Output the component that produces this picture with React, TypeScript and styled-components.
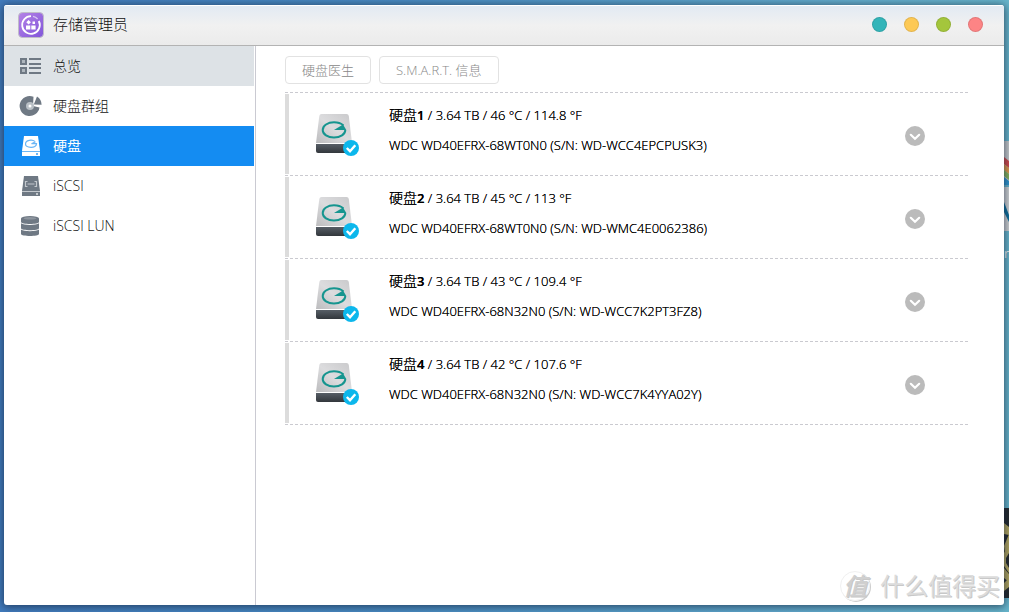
import React, { useState } from 'react';
import styled, { createGlobalStyle } from 'styled-components';

const GlobalStyle = createGlobalStyle`
  *, *::before, *::after { box-sizing: border-box; }
  body {
    margin: 0;
    font-family: "Open Sans", "Noto Sans CJK SC", sans-serif;
    font-size: 13px;
    line-height: 20px;
    color: #000;
  }
  button { font: inherit; cursor: pointer; }
  ul { list-style: none; margin: 0; padding: 0; }
`;

const Desktop = styled.div`
  position: relative;
  display: flex;
  min-height: 100vh;
  padding: 5px 5px 7px 4px;
  overflow: hidden;
  background: linear-gradient(90deg, #427cbe 0%, #4a8dc4 40%, #66b0cf 85%, #68b6cc 100%);
`;

const DesktopIcon = styled.div<{ $top: number; $height: number; $color: string }>`
  position: absolute;
  right: 0;
  top: ${(p) => p.$top}px;
  width: 10px;
  height: ${(p) => p.$height}px;
  background: ${(p) => p.$color};
  svg { display: block; position: absolute; right: 0; top: 0; }
`;

const DesktopLabel = styled.span`
  position: absolute;
  right: 0;
  top: 244px;
  color: #fff;
  font-size: 12px;
`;

const Window = styled.main`
  position: relative;
  flex: 1;
  display: flex;
  flex-direction: column;
  background: #fff;
  border-radius: 3px;
  box-shadow: 0 1px 8px 1px rgba(20, 35, 60, 0.7);
  overflow: hidden;
`;

const TitleBar = styled.header`
  display: flex;
  align-items: center;
  gap: 8px;
  height: 41px;
  padding: 0 21px 2px 13px;
  border-top: 1px solid #fff;
  border-bottom: 1px solid #b3b3b3;
  background: linear-gradient(#e2eaf3, #f1f1f1 50%, #ebebeb);
`;

const Title = styled.h1`
  flex: 1;
  margin: 0;
  padding-bottom: 2px;
  font-size: 15px;
  line-height: 20px;
  font-weight: 300;
  color: #111;
`;

const WindowControls = styled.div`
  display: flex;
  gap: 17px;
`;

const ControlDot = styled.button<{ $color: string }>`
  width: 15px;
  height: 15px;
  padding: 0;
  border: 1px solid rgba(0, 0, 0, 0.1);
  border-radius: 50%;
  background: ${(p) => p.$color};
`;

const Body = styled.div`
  flex: 1;
  display: flex;
`;

const Sidebar = styled.nav`
  flex: none;
  width: 252px;
  padding-right: 1px;
  border-right: 1px solid #cacad2;
`;

const NavItem = styled.button<{ $tone?: 'hover' | 'active' }>`
  display: flex;
  align-items: center;
  gap: 11px;
  width: 100%;
  height: 40px;
  padding: 0 15px;
  border: 0;
  font-size: 14px;
  font-weight: ${(p) => (p.$tone === 'active' ? 400 : 300)};
  color: ${(p) => (p.$tone === 'active' ? '#fff' : '#111')};
  background: ${(p) =>
    p.$tone === 'active' ? '#148cf2' : p.$tone === 'hover' ? '#dde2e6' : 'transparent'};
  svg { flex: none; }
`;

const Content = styled.section`
  flex: 1;
  min-width: 0;
  padding: 10px 36px 10px 29px;
`;

const Toolbar = styled.div`
  display: flex;
  gap: 8px;
  margin-bottom: 8px;
`;

const ToolButton = styled.button`
  height: 28px;
  padding: 0 16px;
  border: 1px solid #e2e2e2;
  border-radius: 4px;
  background: #fff;
  font-size: 13px;
  line-height: 20px;
  font-weight: 300;
  color: #888;
`;

const DiskList = styled.ul`
  border-top: 1px dashed #cacad0;
`;

const DiskRow = styled.li`
  display: flex;
  align-items: center;
  height: 83px;
  padding: 1px 43px 1px 0;
  border-bottom: 1px dashed #cacad0;
`;

const Marker = styled.span`
  align-self: stretch;
  width: 4px;
  margin-right: 25px;
  background: #dcdcdc;
`;

const DiskPicture = styled.span`
  display: flex;
  padding-top: 2px;
`;

const DiskText = styled.div`
  flex: 1;
  margin-left: 29px;
  padding-bottom: 8px;
`;

const DiskLine = styled.p`
  margin: 0;
  line-height: 20px;
  font-weight: 300;
  white-space: nowrap;
  text-shadow: 0 0 0 #000;
  & + & { margin-top: 10px; }
`;

const DiskName = styled.strong`
  font-size: 14px;
  font-weight: 300;
  b { font-size: 13px; font-weight: 600; }
`;

const ExpandButton = styled.button`
  display: flex;
  padding: 0;
  border: 0;
  background: none;
  margin-top: 4px;
`;

const Watermark = styled.div`
  position: absolute;
  right: 9px;
  bottom: 11px;
  display: flex;
  align-items: center;
  gap: 10px;
  color: #dcdcdc;
  font-size: 24px;
  line-height: 30px;
  text-shadow: 1px 1px 0 #c8c8c8;
  pointer-events: none;
`;

const WatermarkBadge = styled.span`
  display: flex;
  align-items: center;
  justify-content: center;
  width: 30px;
  height: 30px;
  border: 1px solid #f0f0f0;
  border-radius: 50%;
  box-shadow: 1px 1px 0 #ccc;
  font-size: 24px;
  font-weight: 500;
  font-style: italic;
  color: #d0d0d0;
`;

const AppLogo = () => (
  <svg width="28" height="28" viewBox="0 0 28 28" aria-hidden="true">
    <defs>
      <linearGradient id="logo" x1="0" y1="0" x2="1" y2="1">
        <stop offset="0" stopColor="#b583e6" />
        <stop offset="1" stopColor="#8155da" />
      </linearGradient>
    </defs>
    <rect x="1.5" y="1.5" width="25" height="25" rx="4" fill="url(#logo)" stroke="#c0bdc8" />
    <path d="M14 5.200A8.800 8.800 0 1 0 21.800 10" fill="none" stroke="#fff" strokeWidth="1.800" />
    <path d="M16 5.400A8.800 8.800 0 0 1 20.600 8" fill="none" stroke="#fff" strokeOpacity="0.600" strokeWidth="1.400" />
    <path d="M9 14.500h4.300v4H9zM14.300 14.500h4.300v4h-4.300zM11.600 9l2.300 2.300-2.300 2.300-2.300-2.300zM15.500 10.500h2.500v2.500h-2.500z" fill="#fff" />
  </svg>
);

const OverviewIcon = () => (
  <svg width="23" height="24" viewBox="0 0 23 24" aria-hidden="true">
    <g fill="#aeb6bd" stroke="#6f7984" strokeWidth="2">
      <rect x="2" y="5" width="5" height="5" />
      <rect x="2" y="14" width="5" height="5" />
    </g>
    <path d="M10 5h12M10 10h12M10 14h12M10 19h12" stroke="#6f7984" strokeWidth="2" />
  </svg>
);

const GroupIcon = () => (
  <svg width="23" height="24" viewBox="0 0 23 24" aria-hidden="true">
    <path d="M14.500 2.800A10 10 0 1 0 20.500 13.500L14 12z" fill="#6f7984" />
    <path d="M14.800 10.600L18 2.600A10 10 0 0 1 22.600 10.800z" fill="#6f7984" />
    <circle cx="11" cy="12" r="4" fill="#b9c0c6" />
    <circle cx="11" cy="12" r="1.500" fill="#fff" />
  </svg>
);

const DriveIcon = ({ iscsi = false }: { iscsi?: boolean }) => {
  const body = iscsi ? '#6f7984' : '#fff';
  const line = iscsi ? '#c3c8cd' : '#6bb6f5';
  return (
    <svg width="23" height="24" viewBox="0 0 23 24" aria-hidden="true">
      <path d="M5 2h14l2 15H3z" fill={body} />
      <path d="M3 18h18v4H3z" fill={body} />
      <path d="M3 17.500h18" stroke={line} />
      <rect x="17" y="19" width="2" height="2" fill={line} />
      {iscsi ? (
        <path d="M8.500 7.500h-2v5h2M15.500 7.500h2v5h-2M8.500 10h7" fill="none" stroke={line} strokeWidth="1.200" />
      ) : (
        <path d="M16.300 7.600C13 5 6.500 6 6.500 10s11 5 11-.300h-5l4-2" fill="none" stroke={line} strokeWidth="1.200" />
      )}
    </svg>
  );
};

const LunIcon = () => (
  <svg width="23" height="24" viewBox="0 0 23 24" aria-hidden="true">
    <g fill="#6f7984">
      <ellipse cx="11" cy="4.500" rx="9" ry="2.500" />
      <path d="M2 4.500v3.500c0 2.600 18 2.600 18 0v-3.500z" />
      <path d="M2 9.300c3 2.200 15 2.200 18 0v5c0 2.600-18 2.600-18 0z" />
      <path d="M2 15.600c3 2.200 15 2.200 18 0v4.400c0 2.600-18 2.600-18 0z" />
    </g>
    <ellipse cx="11" cy="4.300" rx="6.500" ry="1.200" fill="#8e969f" />
  </svg>
);

const DiskImage = () => (
  <svg width="46" height="46" viewBox="0 0 46 46" aria-hidden="true">
    <defs>
      <linearGradient id="lid" x1="0" y1="1" x2="1" y2="0">
        <stop offset="0" stopColor="#bcbcbe" />
        <stop offset="0.5" stopColor="#dcdcde" />
        <stop offset="1" stopColor="#c9c9cb" />
      </linearGradient>
      <linearGradient id="base" x1="0" y1="0" x2="0" y2="1">
        <stop offset="0" stopColor="#575e66" />
        <stop offset="1" stopColor="#32373c" />
      </linearGradient>
    </defs>
    <path d="M7.500 2H32.500q2 0 2.300 2L38 31H2L5.300 4Q5.600 2 7.500 2z" fill="url(#lid)" />
    <path d="M2 32h36v7q0 2-2 2H4q-2 0-2-2z" fill="url(#base)" />
    <path
      d="M29.500 13.400C27 11.300 23.800 10.300 20 10.300c-6.300 0-11.300 3.300-11.300 7.600s5 7.600 11.300 7.600 11.300-3.300 11.300-7.600"
      fill="none"
      stroke="#16958f"
      strokeWidth="2"
    />
    <path d="M29 12.500l3.300 5.600H20z" fill="#16958f" />
    <circle cx="37" cy="36" r="8" fill="#0cb7ec" />
    <path d="M32.800 36l3.200 3.200 5.300-6" fill="none" stroke="#fff" strokeWidth="2.400" />
  </svg>
);

const ChevronIcon = () => (
  <svg width="20" height="20" viewBox="0 0 20 20" aria-hidden="true">
    <circle cx="10" cy="10" r="10" fill="#bbb" />
    <path d="M5.800 8.800L10 12.800l4.200-4" fill="none" stroke="#fff" strokeWidth="2.200" strokeLinecap="round" />
  </svg>
);

const navItems = [
  { id: 'overview', label: '总览', icon: <OverviewIcon /> },
  { id: 'groups', label: '硬盘群组', icon: <GroupIcon /> },
  { id: 'disks', label: '硬盘', icon: <DriveIcon /> },
  { id: 'iscsi', label: 'iSCSI', icon: <DriveIcon iscsi /> },
  { id: 'lun', label: 'iSCSI LUN', icon: <LunIcon /> },
];

const controls = [
  { label: '固定', color: '#33b5b9' },
  { label: '最小化', color: '#fdc955' },
  { label: '最大化', color: '#a4c63c' },
  { label: '关闭', color: '#fd8485' },
];

const disks = [
  { no: 1, stats: '3.64 TB / 46 °C / 114.8 °F', model: 'WDC WD40EFRX-68WT0N0 (S/N: WD-WCC4EPCPUSK3)' },
  { no: 2, stats: '3.64 TB / 45 °C / 113 °F', model: 'WDC WD40EFRX-68WT0N0 (S/N: WD-WMC4E0062386)' },
  { no: 3, stats: '3.64 TB / 43 °C / 109.4 °F', model: 'WDC WD40EFRX-68N32N0 (S/N: WD-WCC7K2PT3FZ8)' },
  { no: 4, stats: '3.64 TB / 42 °C / 107.6 °F', model: 'WDC WD40EFRX-68N32N0 (S/N: WD-WCC7K4YYA02Y)' },
];

export default function App() {
  const [active, setActive] = useState('disks');
  return (
    <>
      <GlobalStyle />
      <Desktop>
        <DesktopIcon $top={141} $height={44} $color="#c9cbcc">
          <svg width="5" height="44" viewBox="0 0 5 44" aria-hidden="true">
            <path d="M0 16l5 4v7l-5-4z" fill="#d54848" />
            <path d="M0 23l5 4v6l-5-4z" fill="#e29a4a" />
            <path d="M0 29l5 4v6l-5-4z" fill="#86b45c" />
            <path d="M0 36l5 4v4H0z" fill="#2f95cf" />
          </svg>
        </DesktopIcon>
        <DesktopIcon $top={187} $height={44} $color="#d3d4d5">
          <svg width="5" height="44" viewBox="0 0 5 44" aria-hidden="true">
            <path d="M0 15l5 13v7l-5-10z" fill="#0d6f9c" />
          </svg>
        </DesktopIcon>
        <DesktopLabel aria-hidden="true">er</DesktopLabel>
        <DesktopIcon $top={508} $height={90} $color="#24272a">
          <svg width="5" height="90" viewBox="0 0 5 90" aria-hidden="true">
            <path d="M0 15l5 4v8l-5-1zM5 26v13l-4 6-1-7zM5 35v10l-3 5v5l3 5v5l-5-7v-13zM0 60l5 6v8l-5-4zM0 75l5-5v9l-5 4z" fill="#b5a75e" />
          </svg>
        </DesktopIcon>
        <Window>
          <TitleBar>
            <AppLogo />
            <Title>存储管理员</Title>
            <WindowControls>
              {controls.map((c) => (
                <ControlDot key={c.label} $color={c.color} aria-label={c.label} />
              ))}
            </WindowControls>
          </TitleBar>
          <Body>
            <Sidebar>
              {navItems.map((item) => (
                <NavItem
                  key={item.id}
                  $tone={item.id === active ? 'active' : item.id === 'overview' ? 'hover' : undefined}
                  onClick={() => setActive(item.id)}
                >
                  {item.icon}
                  {item.label}
                </NavItem>
              ))}
            </Sidebar>
            <Content>
              <Toolbar>
                <ToolButton disabled>硬盘医生</ToolButton>
                <ToolButton disabled>S.M.A.R.T. 信息</ToolButton>
              </Toolbar>
              <DiskList>
                {disks.map((d) => (
                  <DiskRow key={d.no}>
                    <Marker />
                    <DiskPicture><DiskImage /></DiskPicture>
                    <DiskText>
                      <DiskLine>
                        <DiskName>硬盘<b>{d.no}</b></DiskName> / {d.stats}
                      </DiskLine>
                      <DiskLine>{d.model}</DiskLine>
                    </DiskText>
                    <ExpandButton aria-label={`展开硬盘${d.no}`}>
                      <ChevronIcon />
                    </ExpandButton>
                  </DiskRow>
                ))}
              </DiskList>
            </Content>
          </Body>
        </Window>
        <Watermark>
          <WatermarkBadge>值</WatermarkBadge>
          <span>什么值得买</span>
        </Watermark>
      </Desktop>
    </>
  );
}
